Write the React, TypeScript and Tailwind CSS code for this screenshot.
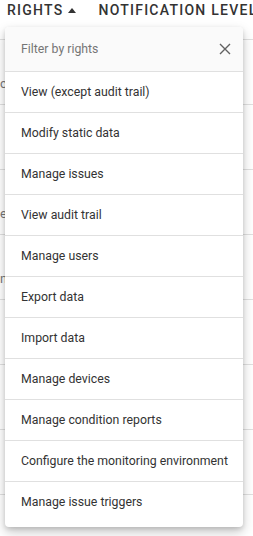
import React from 'react';

const rights = [
  'View (except audit trail)',
  'Modify static data',
  'Manage issues',
  'View audit trail',
  'Manage users',
  'Export data',
  'Import data',
  'Manage devices',
  'Manage condition reports',
  'Configure the monitoring environment',
  'Manage issue triggers',
];

// table rows peeking out from behind the dropdown (only a glyph shows)
const rows = ['c', '', 'e', 'n', '', '', '', ''];

const App: React.FC = () => {
  return (
    <div className="relative w-[253px] h-[536px] overflow-hidden bg-white font-['Roboto','Liberation_Sans',sans-serif]">
      {/* Table header */}
      <div className="flex items-start h-[40px] border-b border-[#e0e0e0] pl-[7px] whitespace-nowrap text-[14px] leading-[20px] font-medium tracking-[1.25px] text-[#333]">
        <span className="shrink-0">RIGHTS</span>
        <svg className="shrink-0 ml-[5px] mt-[8px]" width="8" height="5" viewBox="0 0 8 5">
          <path d="M0 5 L4 0 L8 5 Z" fill="#333" />
        </svg>
        <span className="shrink-0 ml-[22px]">NOTIFICATION LEVEL</span>
      </div>

      {/* Table body */}
      <div className="flex flex-col">
        {rows.map((r, i) => (
          <div key={i} className="h-[65px] border-b border-[#e0e0e0] pt-[36px]">
            <span className="block text-[13px] leading-[16px] text-[#777]">{r}</span>
          </div>
        ))}
      </div>

      {/* Filter dropdown */}
      <div className="absolute left-[5px] top-[27px] w-[238px] bg-white rounded-[4px] shadow-[0_5px_12px_rgba(0,0,0,0.22),0_2px_4px_rgba(0,0,0,0.12)] pb-[4px] overflow-hidden">
        <div className="flex items-center justify-between h-[45px] pl-[16px] pr-[12px] bg-[#fafafa] border-b border-[#e0e0e0]">
          <span className="text-[12.3px] text-[#757575]">Filter by rights</span>
          <svg width="12" height="12" viewBox="0 0 12 12">
            <path d="M1 1 L11 11 M11 1 L1 11" stroke="#616161" strokeWidth="1.4" />
          </svg>
        </div>
        {rights.map((r, i) => (
          <div
            key={r}
            className={`flex items-center h-[41px] pl-[16px] text-[12.3px] text-[#333] ${i < rights.length - 1 ? 'border-b border-[#e0e0e0]' : ''}`}
          >
            {r}
          </div>
        ))}
      </div>
    </div>
  );
};

export default App;
